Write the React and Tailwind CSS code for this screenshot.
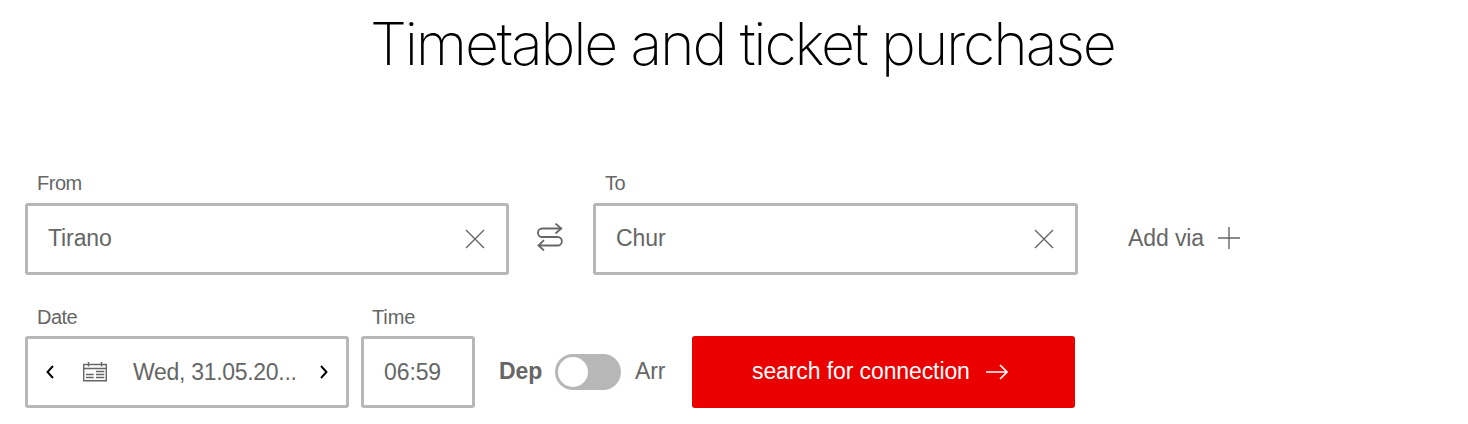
// src/App.jsx
function CrossIcon() {
  return (
    <svg width="20" height="20" viewBox="0 0 20 20" fill="none" stroke="currentColor" strokeWidth="1.4">
      <path d="M1 1L19 19M19 1L1 19" />
    </svg>
  );
}

function SwapIcon() {
  return (
    <svg width="26" height="28" viewBox="0 0 26 28" fill="none" stroke="currentColor" strokeWidth="1.8">
      <path d="M24.5 5.5H5.2a4.25 4.25 0 0 0 0 8.500H20.600a4.250 4.250 0 0 1 0 8.500H1.500" />
      <path d="M18.500 .6l5.700 4.900-5.700 5M7 17.200l-5.500 5.300 5.500 5" />
    </svg>
  );
}

function CalendarIcon() {
  return (
    <svg width="24" height="20" viewBox="0 0 24 20" fill="none" stroke="currentColor" strokeWidth="1.4">
      <path d="M.7 2.500h22.600v16.300H.7zM.7 6.500h22.600M5.500 0v4.500M18.500 0v4.500" />
      <path d="M13 9.500h8.300M3 12.500h7.700M13 12.500h8.300M3 15.500h7.700M13 15.500h8.300" />
    </svg>
  );
}

function Station({ label, value }) {
  return (
    <div className="grow">
      <label className="block h-[32px] pl-[12px] text-[20px] leading-[24px] tracking-[-0.5px]">{label}</label>
      <div className="flex h-[72px] items-center justify-between rounded-[3px] border-3 border-[#b7b7b7] pl-[20px] pr-[21px] text-[23px] tracking-[-0.1px]">
        <span className="pb-[2px]">{value}</span>
        <CrossIcon />
      </div>
    </div>
  );
}

export default function App() {
  return (
    <main className="h-[424px] w-[1468px] overflow-hidden bg-white font-['Liberation_Sans',Arial,sans-serif] text-[#666]">
      <h1 className="h-[171px] pl-[370px] pt-[8px] font-['Inter',sans-serif] text-[59px] font-[150] leading-[72px] tracking-[-2.17px] whitespace-nowrap text-black">
        Timetable and ticket purchase
      </h1>

      <div className="flex items-end pl-[25px]">
        <div className="flex w-[484px]">
          <Station label="From" value="Tirano" />
        </div>
        <button className="ml-[28px] mr-[30px] flex h-[76px] w-[26px] items-center">
          <SwapIcon />
        </button>
        <div className="flex w-[485px]">
          <Station label="To" value="Chur" />
        </div>
        <button className="ml-[50px] flex h-[72px] items-center gap-[14px] pb-[2px] text-[23px] tracking-[-0.1px]">
          Add via
          <svg width="22" height="22" viewBox="0 0 22 22" stroke="currentColor" strokeWidth="1.400">
            <path d="M11 0v22M0 11h22" />
          </svg>
        </button>
      </div>

      <div className="mt-[30px] flex items-end pl-[25px]">
        <div className="w-[324px]">
          <label className="block h-[31px] pl-[12px] text-[20px] leading-[24px] tracking-[-0.5px]">Date</label>
          <div className="flex h-[72px] items-center rounded-[3px] border-3 border-[#b7b7b7] pl-[18px] text-[23px]">
            <svg width="8" height="14" viewBox="0 0 8 14" fill="none" stroke="#000" strokeWidth="1.900">
              <path d="M7 1L1.500 7L7 13" />
            </svg>
            <span className="ml-[29px]">
              <CalendarIcon />
            </span>
            <span className="ml-[26px] w-[187px] tracking-[-0.3px]">Wed, 31.05.20...</span>
            <svg width="8" height="14" viewBox="0 0 8 14" fill="none" stroke="#000" strokeWidth="1.900">
              <path d="M1 1L6.500 7L1 13" />
            </svg>
          </div>
        </div>

        <div className="ml-[12px] w-[114px]">
          <label className="block h-[31px] pl-[11px] text-[20px] leading-[24px] tracking-[-0.1px]">Time</label>
          <div className="flex h-[72px] items-center rounded-[3px] border-3 border-[#b7b7b7] pl-[20px] text-[23px] tracking-[-0.1px]">
            06:59
          </div>
        </div>

        <div className="ml-[24px] flex h-[72px] w-[193px] items-center text-[23px] tracking-[-0.1px]">
          <span className="w-[56px] pb-[2px] font-bold">Dep</span>
          <span className="flex h-[36px] w-[66px] shrink-0 items-center rounded-full bg-[#b7b7b7] pl-[3px]">
            <span className="size-[30px] rounded-full bg-white" />
          </span>
          <span className="ml-[14px] pb-[2px]">Arr</span>
        </div>

        <button className="flex h-[72px] w-[383px] items-center rounded-[3px] bg-[#eb0000] pl-[60px] text-[23px] tracking-[-0.1px] text-white">
          <span className="w-[234px] pb-[2px] text-left">search for connection</span>
          <svg width="22" height="16" viewBox="0 0 22 16" fill="none" stroke="currentColor" strokeWidth="1.600">
            <path d="M0 8h21M14 1l7 7-7 7" />
          </svg>
        </button>
      </div>
    </main>
  );
}
